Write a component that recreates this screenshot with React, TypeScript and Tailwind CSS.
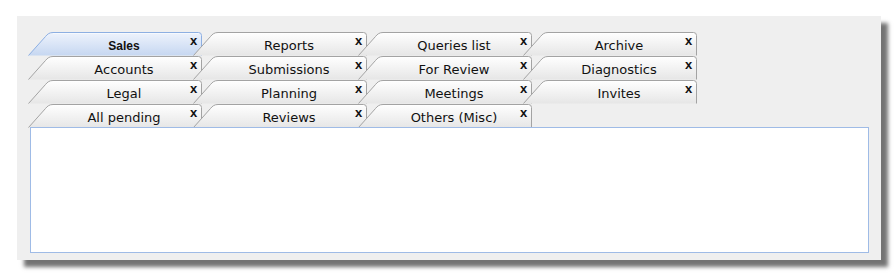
import React from "react";

const rows: string[][] = [
  ["Sales", "Reports", "Queries list", "Archive"],
  ["Accounts", "Submissions", "For Review", "Diagnostics"],
  ["Legal", "Planning", "Meetings", "Invites"],
  ["All pending", "Reviews", "Others (Misc)"],
];

function TabShape({ active, id }: { active: boolean; id: string }) {
  const top = active ? "#eef3fc" : "#ffffff";
  const bottom = active ? "#c6d7f1" : "#e6e6e6";
  const stroke = active ? "#8dafe2" : "#a3a3a3";
  return (
    <svg
      className="absolute inset-0"
      width="174"
      height="24"
      viewBox="0 0 174 24"
    >
      <defs>
        <linearGradient id={id} x1="0" y1="0" x2="0" y2="1">
          <stop offset="0" stopColor={top} />
          <stop offset="1" stopColor={bottom} />
        </linearGradient>
      </defs>
      <path
        d="M0.5,23.5 L17.5,4.5 C19.5,2 21.5,0.5 25,0.5 L170.5,0.5 Q173.5,0.5 173.5,3.5 L173.5,23.5 Z"
        fill={`url(#${id})`}
        stroke="none"
      />
      <path
        d="M0.5,23.5 L17.5,4.5 C19.5,2 21.5,0.5 25,0.5 L170.5,0.5 Q173.5,0.5 173.5,3.5 L173.5,23.5"
        fill="none"
        stroke={stroke}
        strokeWidth="1"
      />
      <path
        d="M25,1.5 L170.5,1.5"
        fill="none"
        stroke={active ? "#f6f9fe" : "#ffffff"}
        strokeWidth="1"
      />
    </svg>
  );
}

function Tab({
  label,
  index,
  active,
  id,
}: {
  label: string;
  index: number;
  active: boolean;
  id: string;
}) {
  return (
    <div
      className={
        index === 0
          ? "relative w-[174px] h-[24px] shrink-0"
          : "relative w-[174px] h-[24px] shrink-0 -ml-[9px]"
      }
    >
      <TabShape active={active} id={id} />
      <div className="relative flex h-full">
        <span
          className={
            active
              ? "flex-1 text-center pl-[20px] pr-[2px] pt-[2px] leading-[24px] text-[12px] font-bold text-[#111] font-['Liberation_Sans',sans-serif]"
              : "flex-1 text-center pl-[20px] pr-[2px] pt-[2px] leading-[24px] text-[13px] text-[#111] font-['DejaVu_Sans',sans-serif]"
          }
        >
          {label}
        </span>
      </div>
      <span className="absolute left-[162px] top-[1px] leading-[15px] text-[13px] font-bold text-[#111] font-['Liberation_Sans',sans-serif]">
        x
      </span>
    </div>
  );
}

export default function App() {
  return (
    <div className="w-[896px] h-[276px] bg-white pt-[16px] pl-[17px]">
      <div className="w-[864px] h-[244px] bg-[#efefef] pt-[16px] pl-[11px] shadow-[7px_7px_4px_rgba(0,0,0,0.55)]">
        <div className="flex flex-col">
          {rows.map((row, r) => (
            <div key={r} className="flex h-[24px]">
              {row.map((label, i) => (
                <Tab
                  key={label}
                  label={label}
                  index={i}
                  active={r === 0 && i === 0}
                  id={`g-${r}-${i}`}
                />
              ))}
            </div>
          ))}
        </div>
        <div className="relative -mt-[1px] ml-[2px] w-[839px] h-[126px] border border-[#9fbbe6] bg-white" />
      </div>
    </div>
  );
}
